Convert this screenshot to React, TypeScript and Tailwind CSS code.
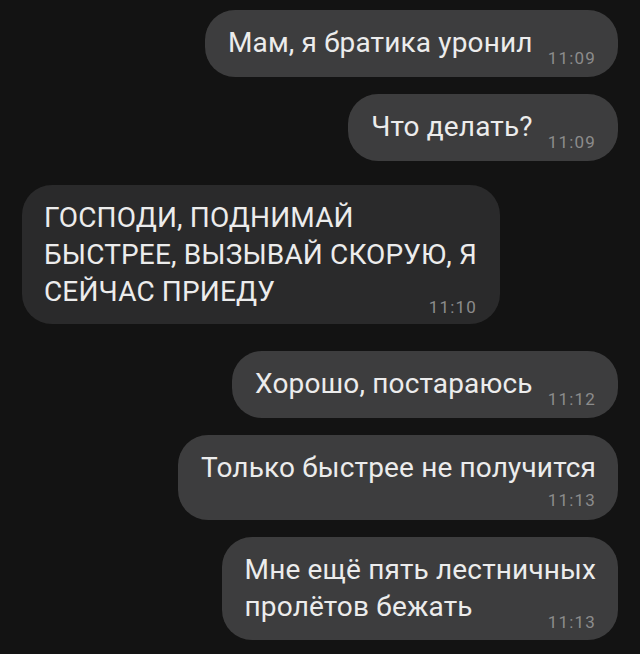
import React from "react";

const font = { fontFamily: "Roboto, 'Noto Sans', sans-serif" };

const timeCls =
  "block text-[17px] leading-[17px] tracking-[1.2px] text-[#8c8c8c] whitespace-nowrap";
const textCls =
  "block text-[28px] leading-[37px] tracking-[0.15px] text-[#ececec] whitespace-nowrap";

function InlineBubble({ text, time }: { text: string; time: string }) {
  return (
    <div className="self-end mr-[22px] flex items-end gap-[15px] rounded-[30px] bg-[#3d3d3e] pl-[23px] pr-[22px] pt-[14px] pb-[16px]">
      <span className={textCls}>{text}</span>
      <span className={timeCls + " mb-[-6px]"}>{time}</span>
    </div>
  );
}

export default function App() {
  return (
    <div className="w-[640px] h-[654px] bg-[#131313] overflow-hidden" style={font}>
      <div className="flex flex-col pt-[10px]">
        <InlineBubble text="Мам, я братика уронил" time="11:09" />
        <div className="h-[17px]" />
        <InlineBubble text="Что делать?" time="11:09" />
        <div className="h-[24px]" />
        <div className="self-start ml-[22px] flex flex-col rounded-[30px] bg-[#2a2a2b] pl-[22px] pr-[23px] pt-[14px] pb-[8px]">
          <span className={textCls}>
            ГОСПОДИ, ПОДНИМАЙ
            <br />
            БЫСТРЕЕ, ВЫЗЫВАЙ СКОРУЮ, Я
            <br />
            СЕЙЧАС ПРИЕДУ
          </span>
          <span className={timeCls + " self-end mt-[-11px]"}>11:10</span>
        </div>
        <div className="h-[27px]" />
        <InlineBubble text="Хорошо, постараюсь" time="11:12" />
        <div className="h-[17px]" />
        <div className="self-end mr-[22px] flex flex-col rounded-[30px] bg-[#3d3d3e] pl-[23px] pr-[22px] pt-[14px] pb-[11px]">
          <span className={textCls}>Только быстрее не получится</span>
          <span className={timeCls + " self-end mt-[6px]"}>11:13</span>
        </div>
        <div className="h-[17px]" />
        <div className="self-end mr-[22px] flex flex-col rounded-[30px] bg-[#3d3d3e] pl-[23px] pr-[22px] pt-[14px] pb-[9px]">
          <span className={textCls}>
            Мне ещё пять лестничных
            <br />
            пролётов бежать
          </span>
          <span className={timeCls + " self-end mt-[-11px]"}>11:13</span>
        </div>
      </div>
    </div>
  );
}
